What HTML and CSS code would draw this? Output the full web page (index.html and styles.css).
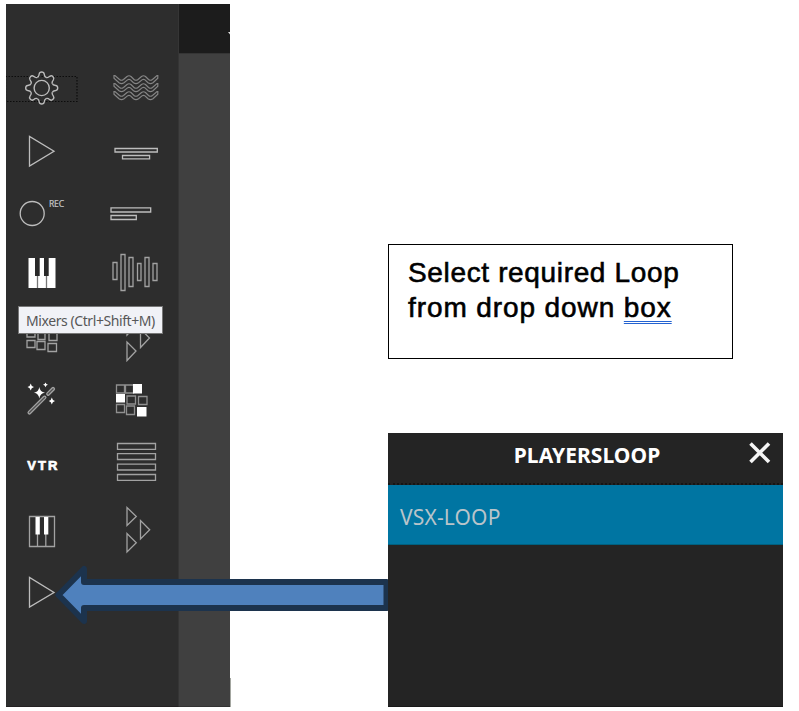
FILE: index.html
```html
<!DOCTYPE html>
<html lang="en">
<head>
<meta charset="utf-8">
<title>Players loop</title>
<link rel="stylesheet" href="styles.css">
</head>
<body>
<main class="page">
  <section class="app">
    <nav class="tools">
      <svg class="focused" viewBox="6 58 86 62"><rect class="focus" x="5.5" y="76.500" width="71.500" height="25"/>
        <g transform="translate(41.7 88)" stroke="#bcbcbc" stroke-width="1.400"><circle r="7.600"/>
          <path id="tooth" d="M-4.400-10.600Q-2.700-11.200-2.500-14Q-2.200-16 0-16Q2.200-16 2.500-14Q2.700-11.200 4.400-10.600"/>
          <use href="#tooth" transform="rotate(45)"/><use href="#tooth" transform="rotate(90)"/><use href="#tooth" transform="rotate(135)"/><use href="#tooth" transform="rotate(180)"/><use href="#tooth" transform="rotate(225)"/><use href="#tooth" transform="rotate(270)"/><use href="#tooth" transform="rotate(315)"/>
        </g></svg>
      <svg viewBox="92 58 86 62"><g stroke="#858585" stroke-width="1.200">
        <path id="wave" d="M114 75.500H115L119.500 79.500Q121.500 81 123.500 79.500L127 76.500Q129 75 131 76.500L134 79.500Q136 81 138 79.500L141.500 76.500Q143.500 75 145.500 76.500L148.500 79.500Q150.500 81 152.500 79.500L157 75.500H157.800V78.300L153 82.700Q150.500 84.500 148 82.700L145 79.900Q143.500 78.700 142 79.900L138.500 82.700Q136 84.500 133.500 82.700L130.500 79.900Q129 78.700 127.500 79.900L124 82.700Q121.500 84.500 119 82.700L114 78.300Z"/>
        <use href="#wave" y="8"/><use href="#wave" y="16"/></g></svg>
      <svg viewBox="6 120 86 62"><path d="M29.500 136.500V166L54 151.200Z"/></svg>
      <svg viewBox="92 120 86 62"><path d="M115 148.500H157.300V152H115ZM122.500 155.500H149.600V158.800H122.500Z"/></svg>
      <svg viewBox="6 182 86 61"><circle cx="32.200" cy="213.500" r="12"/><text class="rec" x="49" y="207" textLength="15">REC</text></svg>
      <svg viewBox="92 182 86 61"><path d="M111 207.800H150.700V212H111ZM111 215.500H136.300V219.500H111Z"/></svg>
      <svg viewBox="6 243 86 62"><path fill="#fff" stroke="none" d="M28.500 258H55.500V288H28.500Z"/><path stroke="#777" d="M37.500 274V288M46.500 274V288"/><path fill="#292929" stroke="none" d="M35 258H39.700V276H35ZM44 258H48.700V276H44Z"/></svg>
      <svg viewBox="92 243 86 62"><path class="dim" d="M113 262.500H117V279.500H113ZM121 254.500H125V290.500H121ZM129 257.500H133V286.500H129ZM137.500 263.500H141V280.500H137.500ZM145 257.500H149V286.500H145ZM153 263.500H157V280.500H153Z"/></svg>
      <svg viewBox="6 305 86 64"><path class="dim" d="M27 330H35V337H27ZM38 332H45V339.500H38ZM49 333H57V340.500H49ZM27 340.500H35V347.500H27ZM37 341.500H45V349.500H37ZM48 343.500H56.500V351.500H48Z"/></svg>
      <svg viewBox="92 305 86 64"><path class="dim" d="M127 316.500V335L136 325.500ZM140.500 329V347.500L149.500 338ZM127 342V360.500L136 351Z"/></svg>
      <svg viewBox="6 369 86 62"><g transform="rotate(-45 28.500 413.500)" class="dim"><rect class="wand" x="28.500" y="412.200" width="24" height="2.600" rx="1.300"/><rect class="wand" x="55" y="412.200" width="9.500" height="2.600" rx="1"/></g>
        <path fill="#fff" stroke="none" d="M39.300 387Q40 392 45 392.700Q40 393.400 39.300 398.500Q38.600 393.400 34 392.700Q38.600 392 39.300 387ZM30.700 383.500Q31.200 386.500 34 387Q31.200 387.500 30.700 390.500Q30.200 387.500 27.500 387Q30.200 386.500 30.700 383.500ZM45.500 382.500Q46 384.400 48 384.800Q46 385.200 45.500 387.200Q45 385.200 43 384.800Q45 384.400 45.500 382.500ZM51.800 397.500Q52.300 400.400 55 400.900Q52.300 401.400 51.800 404.500Q51.300 401.400 48.800 400.900Q51.300 400.400 51.800 397.500Z"/></svg>
      <svg viewBox="92 369 86 62"><path stroke="#909090" stroke-width="1.300" d="M116.500 385H124.500V393H116.500ZM125.500 385H133.500V393H125.500ZM127 396H135.500V404H127ZM138.500 396.500H147V404.500H138.500ZM116.500 404.500H124.500V412.500H116.500ZM126.500 406H134.500V414.500H126.500Z"/><path fill="#fff" stroke="none" d="M133 384H142V393.500H133ZM116 394H125V402.500H116ZM137 407H146.500V416.500H137Z"/></svg>
      <svg viewBox="6 431 86 65"><text class="vtr" x="27.300" y="469.600" textLength="30">VTR</text></svg>
      <svg viewBox="92 431 86 65"><path class="dim" d="M117.500 443.500H155.500V449.300H117.500ZM117.500 453.700H155.500V459.500H117.500ZM117.500 464.200H155.500V470H117.500ZM117.500 474.500H155.500V480.300H117.500Z"/></svg>
      <svg viewBox="6 496 86 66"><path class="dim" d="M29.500 516.500H54.500V546.500H29.500ZM37.500 534V546M45.800 534V546"/><path fill="#fff" stroke="none" d="M35.500 517H39.800V534.500H35.500ZM44 517H48.300V534.500H44Z"/></svg>
      <svg viewBox="92 496 86 66"><path class="dim" d="M127 507.500V525.500L136.300 516.500ZM140.500 520.500V539L149.700 529.700ZM127 533.500V552L136.300 542.700Z"/></svg>
      <svg viewBox="6 562 86 63"><path d="M29.500 577.500V607L54 592.500Z"/></svg>
      <span class="tip">Mixers (Ctrl+Shift+M)</span>
    </nav>
    <div class="stage"><div class="stage-head"><svg viewBox="0 0 3 4"><path d="M1 0H3V2.500Z"/></svg></div></div>
    <i class="edge"></i>
  </section>
  <section class="guide">
    <p class="note">Select required Loop<br><span>from drop down <u>box</u></span></p>
    <div class="panel">
      <header><h1>PLAYERSLOOP</h1><svg class="close" viewBox="0 0 22 22"><path d="M1.500 1.500L20 20M20 1.500L1.500 20"/></svg></header>
      <div class="option"><span>VSX-LOOP</span></div>
    </div>
  </section>
  <svg class="arrow" viewBox="54 562 334 66"><path d="M58.500 595L84 569V582H386.500V608H84V621Z"/></svg>
</main>
</body>
</html>
```
FILE: styles.css
```css
* { box-sizing: border-box; }
body { margin: 0; background: #fff; }
.page { position: relative; display: flex; width: 799px; height: 711px; padding: 4px 16px 4px 6px; overflow: hidden; }
.app { position: relative; display: flex; width: 224px; height: 703px; margin-right: 158px; background: #404040; }
.tools {
  position: relative;
  display: grid;
  grid-template-columns: 86px 86px;
  grid-template-rows: 62px 62px 61px 62px 64px 62px 65px 66px 63px;
  align-content: start;
  width: 173px;
  padding-top: 54px;
  background: #2d2d2d;
  border-right: 1px solid #353535;
  border-bottom: 1px solid #242122;
}
.tools svg { display: block; width: 100%; height: 100%; fill: none; stroke: #bdbdbd; stroke-width: 1.3; }
.tools .dim { stroke: #a2a2a2; }
.tools .wand { fill: #505050; }
.tools .focus { stroke: #0c0c0c; stroke-width: 1.2; stroke-dasharray: 1.5 1.5; }
.tools .rec { font: 8.5px "Noto Sans", sans-serif; fill: #c4c4c4; stroke: #c4c4c4; stroke-width: .2; }
.tools .vtr { font: 700 13px "Liberation Sans", sans-serif; fill: #fff; stroke: #fff; stroke-width: .7; }
.tip {
  position: absolute;
  left: 12px;
  top: 302px;
  width: 145px;
  height: 28px;
  padding-left: 7px;
  border: 1px solid #777;
  background: #f1f2f7;
  color: #575757;
  font: 14px/28px "Noto Sans", sans-serif;
  letter-spacing: -.42px;
  white-space: nowrap;
}
.stage { flex: 1; border-bottom: 1px solid #333; }
.stage-head { display: flex; justify-content: flex-end; height: 50px; padding-top: 28px; background: #1c1c1c; border-bottom: 1px solid #353535; }
.stage-head svg { width: 3px; height: 4px; fill: #ddd; }
.edge { position: absolute; left: 224px; bottom: 0; width: 1px; height: 29px; background: #a3a6a0; }
.guide { width: 395px; padding-top: 240px; }
.note {
  width: 345px;
  height: 115px;
  margin: 0 0 74px;
  padding: 10px 0 0 19px;
  border: 1px solid #000;
  font: 28px/35px "Liberation Sans", sans-serif;
  letter-spacing: .65px;
  color: #000;
  -webkit-text-stroke: .6px #000;
}
.note span { letter-spacing: .9px; }
.note u { text-decoration: underline double #2463d1 1px; text-underline-offset: 4px; }
.panel { height: 274px; background: #242424; border-bottom: 1px solid #191919; }
.panel header { position: relative; display: flex; justify-content: center; height: 52px; padding-left: 3px; border-bottom: 2px dotted #151515; }
.panel h1 { margin: 0; font: 700 21px/45px "Noto Sans", sans-serif; color: #fff; letter-spacing: .05px; }
.close { position: absolute; right: 12px; top: 9px; width: 22px; height: 22px; stroke: #f5f5f5; stroke-width: 3.6; fill: none; }
.option { height: 60px; padding-left: 12px; background: #0075a2; border-bottom: 1px solid #00607f; color: #b9c4ca; font: 21px/64px "Noto Sans", sans-serif; letter-spacing: .15px; }
.arrow { position: absolute; left: 54px; top: 562px; width: 334px; height: 66px; fill: #4f81bd; stroke: #1c334d; stroke-width: 6; stroke-linejoin: round; }
```
